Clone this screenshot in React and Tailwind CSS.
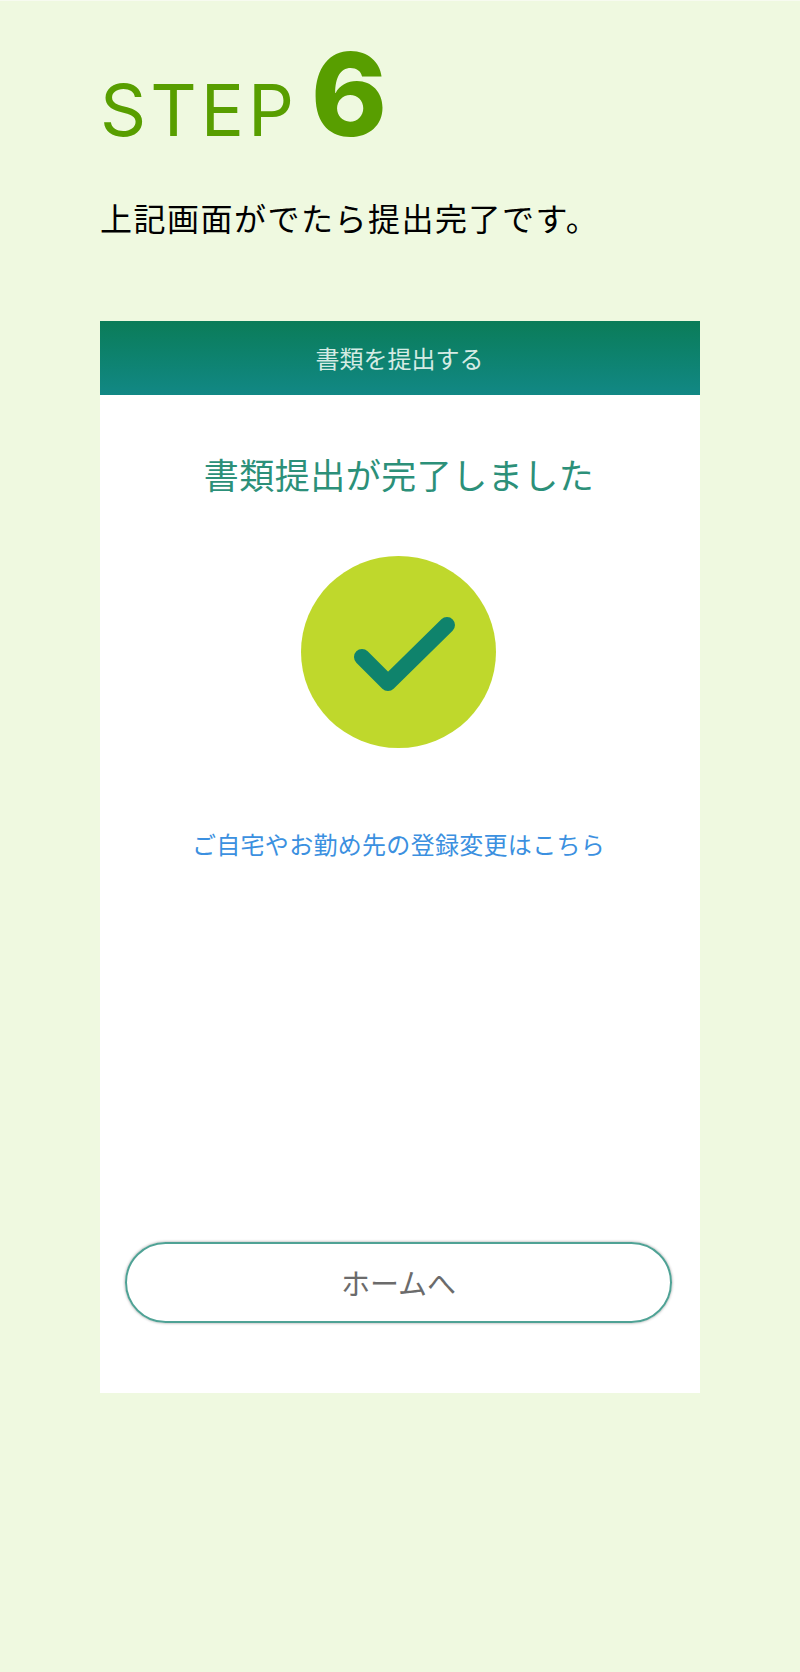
const App = () => {
  return (
    <div className="h-[1672px] w-full bg-[#eff9e0] border-t border-[#f7fbf0] pl-[100px] font-['Noto_Sans_CJK_JP',sans-serif]">
      {/* Step heading */}
      <div className="flex items-baseline h-[136px] pt-[39px] font-['Inter',sans-serif] text-[#589e00]">
        <span className="text-[72px] leading-[110px] font-normal tracking-[4px]">STEP</span>
        <span className="text-[115px] leading-[110px] font-extrabold ml-[13px]">6</span>
      </div>
      <p className="mt-[56px] text-[32px] leading-[48px] tracking-[1.5px] text-black">上記画面がでたら提出完了です。</p>

      {/* Phone screen */}
      <div className="mt-[80px] w-[600px] h-[1072px] bg-white flex flex-col items-center">
        <div className="w-full h-[74px] flex items-center justify-center bg-gradient-to-b from-[#0b7c58] to-[#128885]">
          <span className="text-[24px] text-[#d5ebe4] mr-[1px]">書類を提出する</span>
        </div>
        <h1 className="mt-[55px] text-[35px] leading-[48px] tracking-[0.5px] font-normal text-[#2c9079] mr-[2px]">
          書類提出が完了しました
        </h1>
        <svg viewBox="0 0 195 192" className="mt-[58px] mr-[4px] w-[195px] h-[192px]">
          <ellipse cx="97.5" cy="96" rx="97.5" ry="96" fill="#bfd82c" />
          <path
            d="M61 101 L87 127 L146 69"
            fill="none"
            stroke="#0f836c"
            strokeWidth="16"
            strokeLinecap="round"
            strokeLinejoin="round"
          />
        </svg>
        <a className="mt-[78px] mr-[3px] text-[24px] leading-[36px] tracking-[0.3px] text-[#3b90e0]">ご自宅やお勤め先の登録変更はこちら</a>
        <button className="mt-[380px] mr-[3px] w-[547px] h-[81px] rounded-full border-2 border-[#4fa295] shadow-[0_0_3px_rgba(0,0,0,0.4)] text-[29px] text-[#6b6b6b]">
          ホームへ
        </button>
      </div>
    </div>
  );
};

export default App;
